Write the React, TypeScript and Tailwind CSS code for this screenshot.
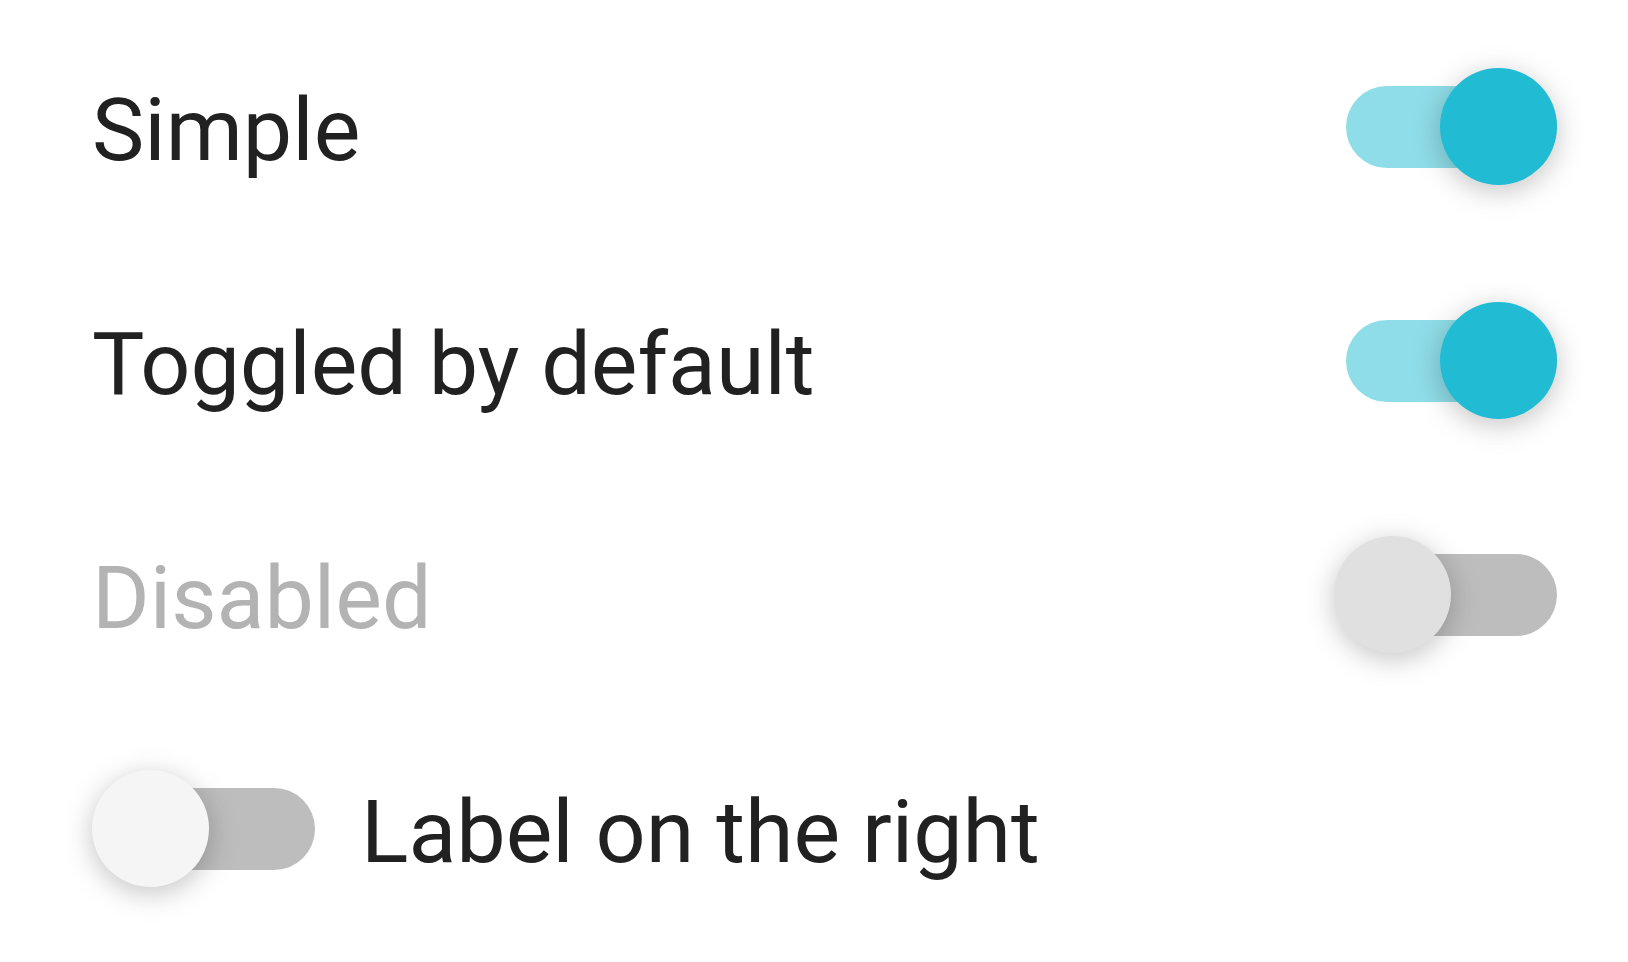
import React from 'react';

interface ToggleProps {
  on?: boolean;
  disabled?: boolean;
}

function Toggle({ on = false, disabled = false }: ToggleProps) {
  const track = disabled ? 'bg-[#bdbdbd]' : on ? 'bg-[#8fdde8]' : 'bg-[#bdbdbd]';
  const thumb = disabled ? 'bg-[#e0e0e0]' : on ? 'bg-[#21bcd4]' : 'bg-[#f5f5f5]';

  return (
    <div className="relative w-[223px] h-[117px] shrink-0">
      <div className={`absolute left-[12px] right-0 top-[18px] h-[82px] rounded-full ${track}`} />
      <div
        className={`absolute top-0 w-[117px] h-[117px] rounded-full shadow-[0_6px_35px_rgba(0,0,0,0.12),0_6px_23px_rgba(0,0,0,0.12)] ${thumb} ${on ? 'right-0' : 'left-0'}`}
      />
    </div>
  );
}

export default function App() {
  return (
    <div
      className="min-h-screen bg-white pt-[9px] pl-[92px] pr-[71px]"
      style={{ fontFamily: 'Roboto, "Liberation Sans", sans-serif' }}
    >
      <div className="h-[234px] flex items-center justify-between">
        <span className="text-[88px] text-[#212121] pt-[8px]">Simple</span>
        <Toggle on />
      </div>
      <div className="h-[234px] flex items-center justify-between">
        <span className="text-[88px] text-[#212121] pt-[8px]">Toggled by default</span>
        <Toggle on />
      </div>
      <div className="h-[234px] flex items-center justify-between">
        <span className="text-[88px] text-[#b3b3b3] pt-[8px]">Disabled</span>
        <Toggle disabled />
      </div>
      <div className="h-[234px] flex items-center gap-[46px]">
        <Toggle />
        <span className="text-[88px] text-[#212121] pt-[8px]">Label on the right</span>
      </div>
    </div>
  );
}
